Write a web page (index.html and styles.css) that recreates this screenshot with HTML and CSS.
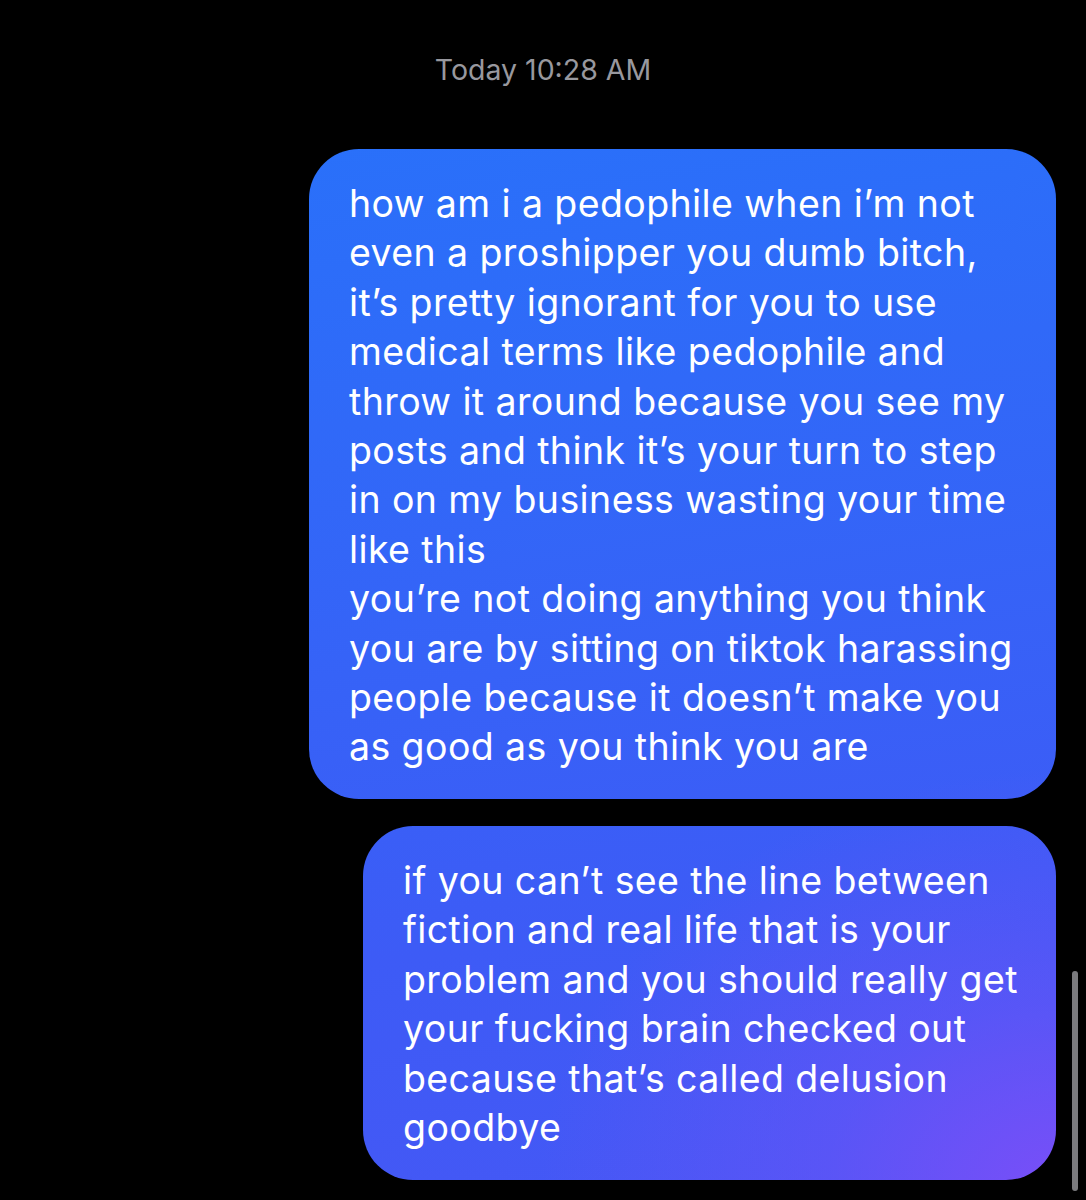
FILE: index.html
```html
<!DOCTYPE html>
<html>
<head>
<meta charset="utf-8">
<link rel="stylesheet" href="styles.css">
</head>
<body>
<div class="screen">
  <div class="stamp">Today 10:28 AM</div>
  <div class="thread">
    <div class="bubble b1">how am i a pedophile when i’m not<br>even a proshipper you dumb bitch,<br>it’s pretty ignorant for you to use<br>medical terms like pedophile and<br>throw it around because you see my<br>posts and think it’s your turn to step<br>in on my business wasting your time<br>like this<br>you’re not doing anything you think<br>you are by sitting on tiktok harassing<br>people because it doesn’t make you<br>as good as you think you are</div>
    <div class="bubble b2">if you can’t see the line between<br>fiction and real life that is your<br>problem and you should really get<br>your fucking brain checked out<br>because that’s called delusion<br>goodbye</div>
  </div>
  <div class="scrollbar"></div>
</div>
</body>
</html>
```
FILE: styles.css
```css
html, body {
  margin: 0;
  padding: 0;
  background: #000;
}
.screen {
  position: relative;
  width: 1086px;
  height: 1200px;
  overflow: hidden;
  background: #000;
  font-family: Inter, "Liberation Sans", sans-serif;
}
.stamp {
  text-align: center;
  color: #98989e;
  font-size: 28.5px;
  padding-top: 51px;
  line-height: 38px;
  width: 1086px;
}
.thread {
  display: flex;
  flex-direction: column;
  align-items: flex-end;
  padding-right: 30px;
  margin-top: 60px;
  gap: 27px;
}
.bubble {
  box-sizing: border-box;
  color: #fff;
  font-size: 37.5px;
  line-height: 49.4px;
  letter-spacing: 0.4px;
  white-space: nowrap;
  padding: 30px 10px 30px 40px;
  border-radius: 50px;
  background:
    radial-gradient(ellipse 520px 420px at 1060px 1190px, rgba(124, 78, 248, 0.95) 0%, rgba(110, 82, 247, 0.5) 45%, rgba(90, 88, 246, 0) 100%),
    linear-gradient(172deg, #2575fb 0%, #3069f8 35%, #3d5bf6 75%, #4657f5 100%);
  background-attachment: fixed;
}
.b1 {
  width: 747px;
  height: 650px;
}
.b2 {
  width: 693px;
  height: 354px;
}
.scrollbar {
  position: absolute;
  right: 8px;
  top: 971px;
  width: 6px;
  height: 220px;
  border-radius: 3px;
  background: #7b7b7e;
}
```
